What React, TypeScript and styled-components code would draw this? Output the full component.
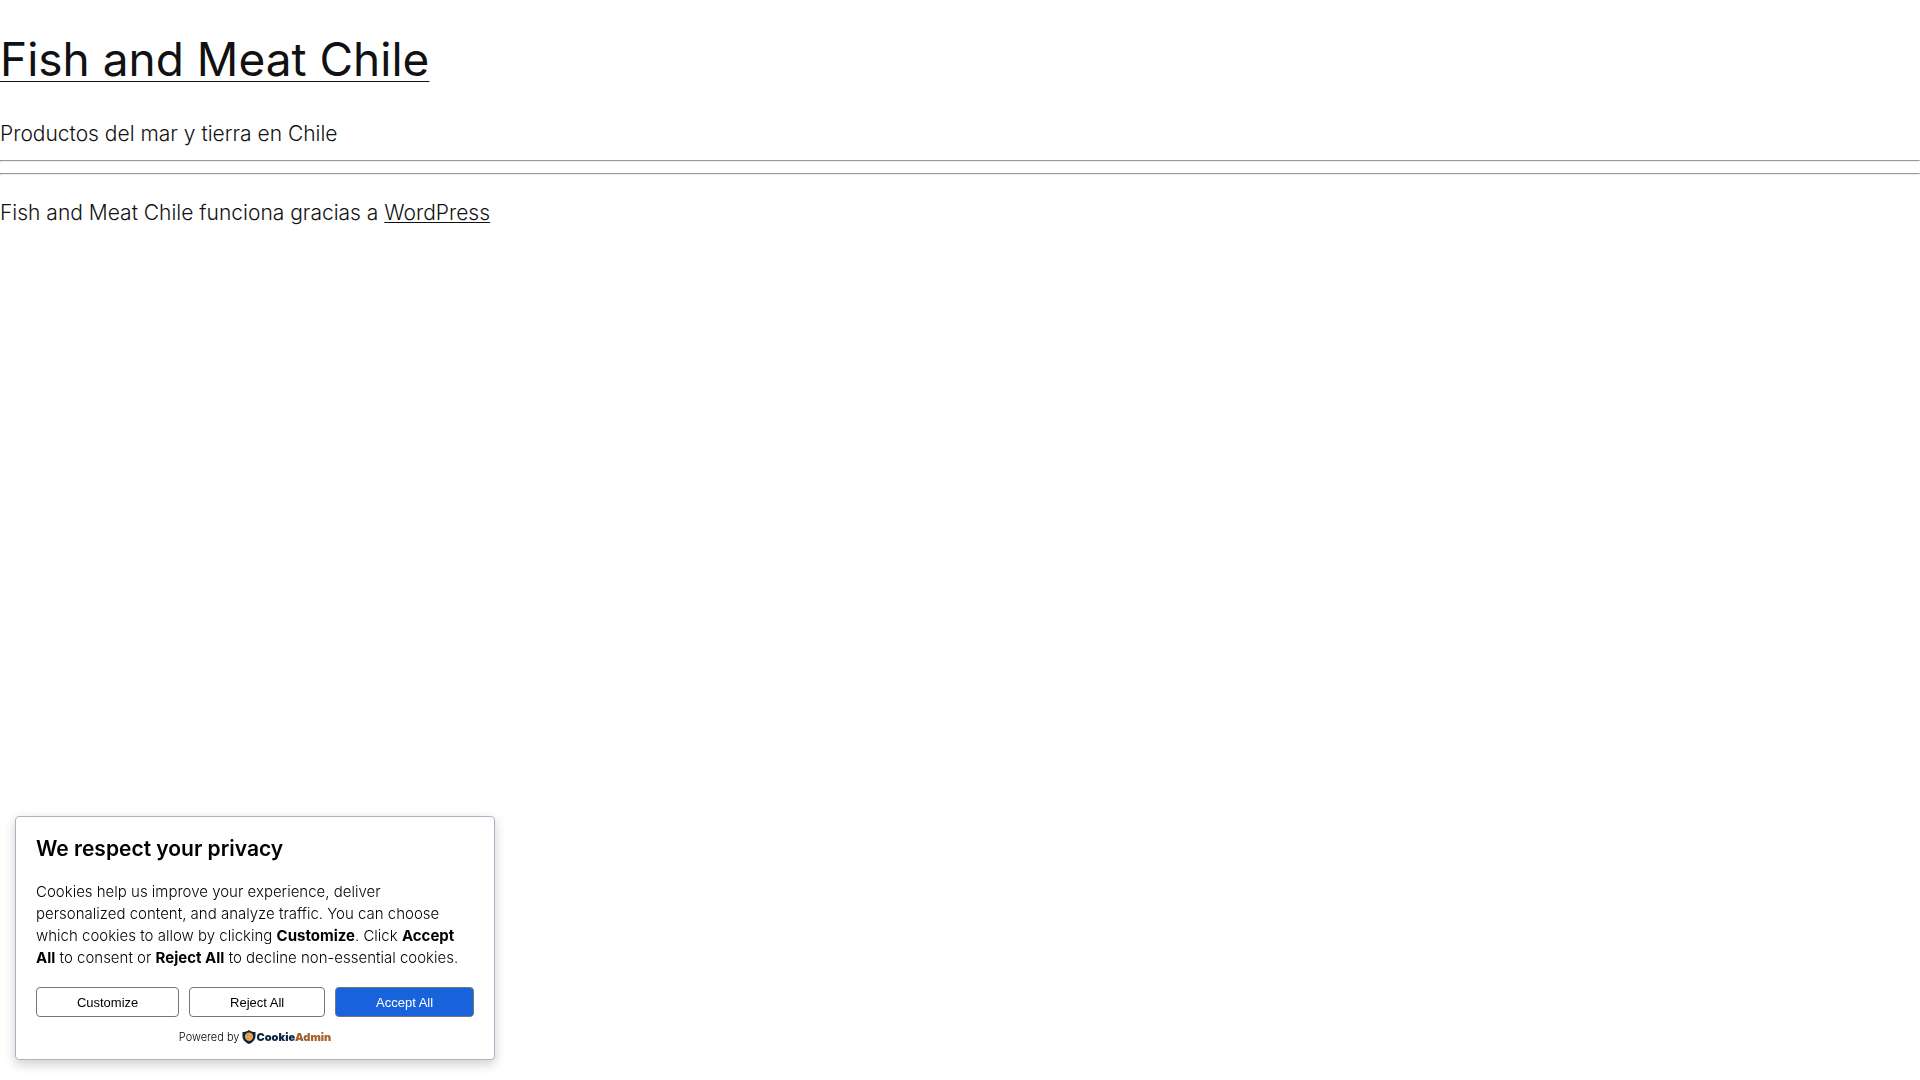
import React from "react";
import styled, { createGlobalStyle } from "styled-components";

const GlobalStyle = createGlobalStyle`
  body {
    margin: 0;
    background: #fff;
    color: #111;
    font-family: Inter, "Open Sans", sans-serif;
    font-size: 21px;
    font-weight: 300;
    line-height: 31px;
  }
`;

const TextLink = styled.a`
  color: inherit;
  text-decoration: underline;
  text-decoration-thickness: 1px;
  text-underline-offset: 2px;
`;

const SiteTitle = styled.h1`
  margin: 32px 0;
  font-size: 46px;
  font-weight: 400;
  line-height: 54px;

  ${TextLink} {
    text-underline-offset: 5px;
  }
`;

const Tagline = styled.p`
  margin: 0;
`;

const Rule = styled.hr`
  margin: 11px 0;
  color: gray;
  border: 1px inset;
`;

const Credit = styled.p`
  margin: 22px 0;
`;

const Notice = styled.section`
  position: fixed;
  bottom: 20px;
  left: 15px;
  box-sizing: border-box;
  width: 480px;
  max-width: calc(100% - 30px);
  padding: 16px 20px 14px;
  border: 1px solid #a8b5c2;
  border-radius: 4px;
  background: #fff;
  color: #000;
  box-shadow: 0 4px 12px rgba(0, 0, 0, 0.2);
`;

const NoticeTitle = styled.h2`
  margin: 0 0 17px;
  font-size: 21px;
  font-weight: 600;
  line-height: 31px;
`;

const NoticeText = styled.p`
  margin: 0 0 18px;
  font-size: 15px;
  line-height: 22px;

  strong {
    font-weight: 700;
  }
`;

const Actions = styled.div`
  display: flex;
  gap: 10px;
`;

const ActionButton = styled.button<{ $primary?: boolean }>`
  flex: 1 1 auto;
  height: 30px;
  padding: 0 10px;
  border: 1px solid #767676;
  border-radius: 4px;
  background: ${(p) => (p.$primary ? "#1863dc" : "#fff")};
  color: ${(p) => (p.$primary ? "#fff" : "#000")};
  font: 400 13px "Liberation Sans", Arial, sans-serif;
  cursor: pointer;
`;

const PoweredBy = styled.div`
  display: flex;
  align-items: center;
  justify-content: center;
  gap: 3px;
  margin-top: 12px;
  font-size: 11px;
  line-height: 16px;
`;

const Brand = styled.a`
  display: flex;
  align-items: center;
  color: #0b2440;
  font-size: 11px;
  font-weight: 900;
  text-decoration: none;

  span {
    color: #a5622a;
  }
`;

const ShieldCookie = () => (
  <svg width="14" height="14" viewBox="0 0 28 28" aria-hidden="true">
    <path
      d="M14 0 C18 3 22 4 27 4 V12 C27 20 21 25 14 28 C7 25 1 20 1 12 V4 C6 4 10 3 14 0 Z"
      fill="#0b2440"
    />
    <path
      d="M14 5 C16 5 17 6 19 6 C19 8 22 9 22 11 C23 16 20 21 14 22 C9 21 5 17 6 12 C6 8 10 5 14 5 Z"
      fill="#e8a650"
    />
    <circle cx="11" cy="10" r="1" fill="#a5622a" />
    <circle cx="17" cy="12" r="1" fill="#a5622a" />
    <circle cx="12" cy="16" r="1" fill="#a5622a" />
  </svg>
);

export default function App() {
  return (
    <>
      <GlobalStyle />
      <header>
        <SiteTitle>
          <TextLink href="#">Fish and Meat Chile</TextLink>
        </SiteTitle>
        <Tagline>Productos del mar y tierra en Chile</Tagline>
      </header>
      <Rule />
      <Rule />
      <footer>
        <Credit>
          Fish and Meat Chile funciona gracias a <TextLink href="#">WordPress</TextLink>
        </Credit>
      </footer>
      <Notice aria-labelledby="privacy-title">
        <NoticeTitle id="privacy-title">We respect your privacy</NoticeTitle>
        <NoticeText>
          Cookies help us improve your experience, deliver personalized content, and analyze
          traffic. You can choose which cookies to allow by clicking <strong>Customize</strong>.
          Click <strong>Accept All</strong> to consent or <strong>Reject All</strong> to decline
          non-essential cookies.
        </NoticeText>
        <Actions>
          <ActionButton type="button">Customize</ActionButton>
          <ActionButton type="button">Reject All</ActionButton>
          <ActionButton type="button" $primary>
            Accept All
          </ActionButton>
        </Actions>
        <PoweredBy>
          Powered by
          <Brand href="#">
            <ShieldCookie />
            Cookie<span>Admin</span>
          </Brand>
        </PoweredBy>
      </Notice>
    </>
  );
}
